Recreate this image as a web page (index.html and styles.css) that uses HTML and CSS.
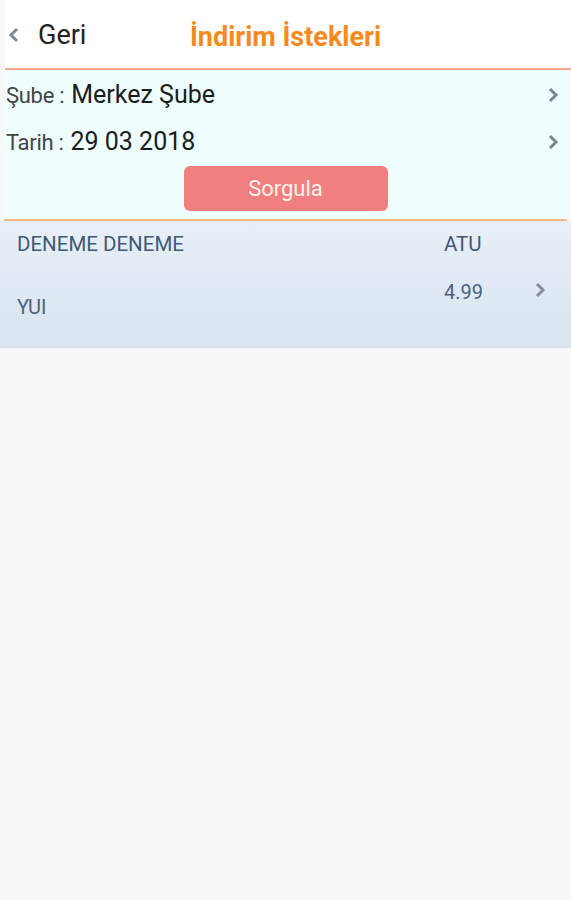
FILE: index.html
```html
<!DOCTYPE html>
<html lang="tr">

<head>
    <meta charset="UTF-8">
    <meta name="viewport" content="width=device-width, initial-scale=1.0">
    <title>İndirim İstekleri</title>
    <link rel="stylesheet" href="styles.css">
</head>

<body>
    <header class="topbar">
        <a class="back" href="#">
            <svg class="back-icon" width="12" height="16" viewBox="0 0 12 16">
                <path d="M9 2 L3 8 L9 14" fill="none" stroke="#7d8c9c" stroke-width="3" />
            </svg>
            <span>Geri</span>
        </a>
        <h1 class="title">İndirim İstekleri</h1>
    </header>

    <section class="filter">
        <div class="filter-row">
            <span class="label">Şube :</span>
            <span class="value">Merkez Şube</span>
            <svg class="chev" width="12" height="16" viewBox="0 0 12 16">
                <path d="M3 2 L9 8 L3 14" fill="none" stroke="#7d8590" stroke-width="3" />
            </svg>
        </div>
        <div class="filter-row">
            <span class="label">Tarih :</span>
            <span class="value">29 03 2018</span>
            <svg class="chev" width="12" height="16" viewBox="0 0 12 16">
                <path d="M3 2 L9 8 L3 14" fill="none" stroke="#7d8590" stroke-width="3" />
            </svg>
        </div>
        <div class="actions">
            <button type="button" class="query">Sorgula</button>
        </div>
    </section>

    <ul class="list">
        <li class="item">
            <div class="item-col">
                <span class="name">DENEME DENEME</span>
                <span class="sub">YUI</span>
            </div>
            <div class="item-price">
                <span class="name">ATU</span>
                <span class="price">4.99</span>
            </div>
            <svg class="item-chev" width="12" height="16" viewBox="0 0 12 16">
                <path d="M3 2 L9 8 L3 14" fill="none" stroke="#858d98" stroke-width="3" />
            </svg>
        </li>
    </ul>
</body>

</html>
```

FILE: styles.css
```css
body {
    margin: 0;
    background-color: #f8f8f8;
    font-family: Roboto, "Noto Sans", sans-serif;
}

.topbar {
    position: relative;
    height: 68px;
    background-color: #fff;
    display: flex;
    align-items: center;
    border-bottom: 2px solid #f2a68c;
    margin-left: 5px;
}

.back {
    display: flex;
    align-items: center;
    gap: 18px;
    padding-left: 3px;
    color: #222;
    font-size: 27px;
    text-decoration: none;
    margin-top: 2px;
}

.title {
    position: absolute;
    left: 0;
    right: 5px;
    top: 3px;
    margin: 0;
    line-height: 68px;
    text-align: center;
    font-size: 27px;
    font-weight: 700;
    color: #f7891f;
}

.filter {
    background-color: #effefe;
    padding-top: 1px;
    border-bottom: 2px solid #f1b57f;
    margin: 0 4px 0 4px;
    padding-bottom: 8px;
}

.filter-row {
    display: flex;
    align-items: baseline;
    height: 47px;
    line-height: 47px;
    padding-left: 2px;
}

.label {
    font-size: 22px;
    color: #444;
    margin-right: 7px;
    letter-spacing: -0.3px;
}

.value {
    font-size: 25px;
    color: #1c1c1c;
    flex: 1;
}

.chev {
    align-self: center;
    margin-right: 8px;
}

.actions {
    display: flex;
    justify-content: center;
    margin-top: 1px;
}

.query {
    width: 204px;
    height: 45px;
    border: none;
    border-radius: 6px;
    background-color: #f07f7e;
    color: #fdf3f2;
    font-family: Roboto, sans-serif;
    font-size: 22px;
}

.list {
    list-style: none;
    margin: 0;
    padding: 0;
}

.item {
    display: flex;
    height: 126px;
    background: linear-gradient(#e9eff8, #d8e4f0);
    border-bottom: 1px solid #d4dfea;
    color: #3d5a78;
}

.item-col {
    flex: 1;
    display: flex;
    flex-direction: column;
    padding-left: 17px;
}

.name {
    font-size: 20.5px;
    margin-top: 11px;
}

.sub {
    font-size: 20px;
    margin-top: 39px;
    color: #4a6480;
}

.item-price {
    width: 90px;
    display: flex;
    flex-direction: column;
}

.price {
    font-size: 20px;
    margin-top: 24px;
    color: #4a6480;
}

.item-chev {
    margin: 61px 25px 0 0;
}
```
